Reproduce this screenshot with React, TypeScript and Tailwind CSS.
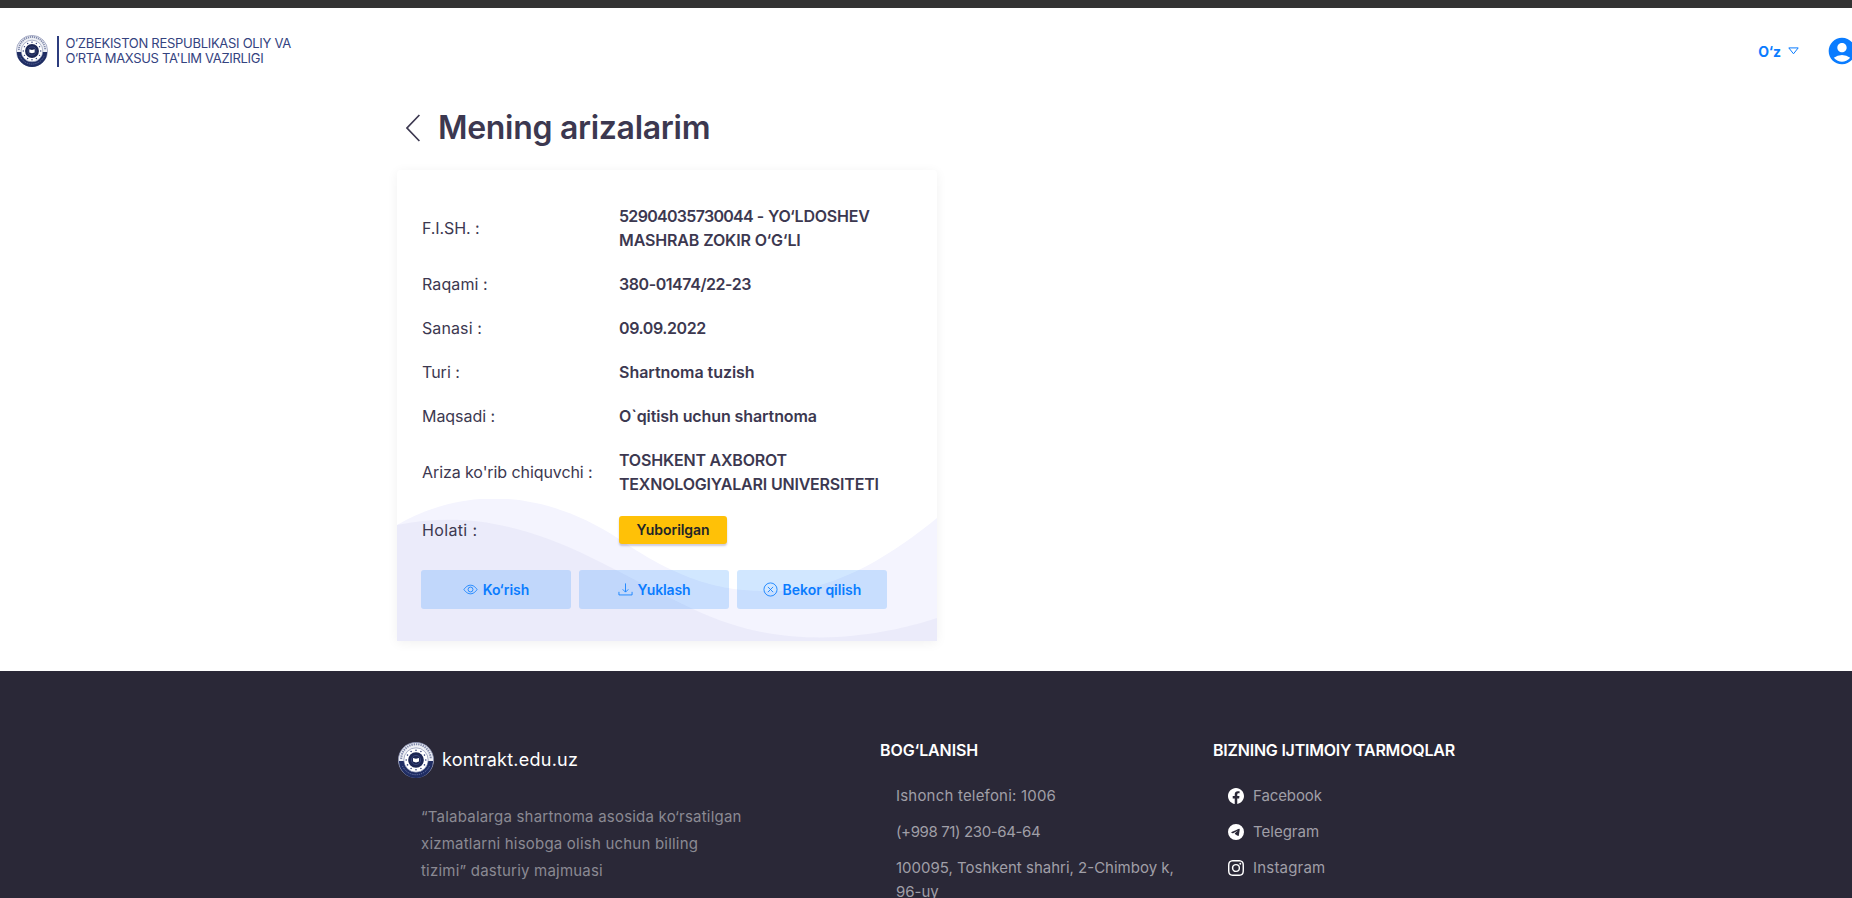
import type { ReactNode } from "react";
import { MdAccountCircle } from "react-icons/md";
import { BsFacebook, BsTelegram, BsInstagram, BsYoutube } from "react-icons/bs";

function Emblem({ className }: { className: string }) {
  const dots = Array.from({ length: 12 }, (_, i) => (i * Math.PI) / 6);
  return (
    <svg viewBox="0 0 36 36" className={className} fill="none">
      <circle cx="18" cy="18" r="17.6" fill="#eef0f5" stroke="#8b93b5" strokeWidth="0.8" />
      <path d="M1 19a17 17 0 0 0 34 0z" fill="#1f2d63" />
      <path d="M3.2 17a14.8 14.8 0 0 1 29.6 0" stroke="#8089ab" strokeWidth="2" strokeDasharray="1.4 0.9" />
      <path d="M4.5 24a14.8 14.8 0 0 0 27 0" stroke="#6c78a8" strokeWidth="1" strokeDasharray="1.2 1" />
      <circle cx="18" cy="18" r="12.2" fill="#fff" stroke="#6e78a0" strokeWidth="0.6" />
      {dots.map((a) => (
        <circle key={a} cx={18 + 9.8 * Math.sin(a)} cy={18 - 9.8 * Math.cos(a)} r="0.8" fill="#34427a" />
      ))}
      <circle cx="18" cy="18" r="7.8" fill="#1c2754" />
      <circle cx="18" cy="18" r="4.6" stroke="#46528a" strokeWidth="0.7" />
      <path d="M15 16l3 .8 3-.8v3.6l-3 .8-3-.8z" fill="#fff" />
    </svg>
  );
}

function Row({ label, children, tall }: { label: ReactNode; children: ReactNode; tall?: boolean }) {
  return (
    <div className={tall ? "flex h-12 items-center" : "flex items-center py-[10px]"}>
      <div className="w-[197px] shrink-0 text-[16px] leading-6">{label}</div>
      <div className="text-[16px] leading-6 font-semibold whitespace-nowrap">{children}</div>
    </div>
  );
}

function ActionButton({ icon, children }: { icon: ReactNode; children: ReactNode }) {
  return (
    <button className="flex h-[39px] w-[150px] items-center justify-center gap-[5px] rounded-[3px] bg-[#007bff]/18 text-[14px] font-semibold text-[#0a7cff]">
      {icon}
      {children}
    </button>
  );
}

const eye = (
  <svg viewBox="0 0 16 16" className="h-[15px] w-[15px]" fill="none" stroke="currentColor" strokeWidth="0.9">
    <path d="M1 8s2.6-4.6 7-4.6S15 8 15 8s-2.6 4.6-7 4.6S1 8 1 8z" />
    <circle cx="8" cy="8" r="2.6" />
  </svg>
);

const download = (
  <svg viewBox="0 0 16 16" className="h-[15px] w-[15px]" fill="none" stroke="currentColor" strokeWidth="0.9">
    <path d="M1 10.5v3.3h14v-3.3M8 1.5v9M5 7.8l3 3 3-3" />
  </svg>
);

const cancel = (
  <svg viewBox="0 0 16 16" className="h-[15px] w-[15px]" fill="none" stroke="currentColor" strokeWidth="0.9">
    <circle cx="8" cy="8" r="7" />
    <path d="M5.2 5.2l5.6 5.6M10.8 5.2l-5.6 5.6" />
  </svg>
);

function Social({ icon, children }: { icon: ReactNode; children: ReactNode }) {
  return (
    <li className="flex h-6 items-center gap-[9px]">
      <span className="text-[16px] text-white">{icon}</span>
      {children}
    </li>
  );
}

export default function App() {
  return (
    <div className="flex h-[898px] w-full flex-col overflow-hidden bg-white font-['Inter',sans-serif] text-[#3c3850]">
      <div className="h-2 shrink-0 bg-[#333333]" />
      <header className="flex h-[86px] shrink-0 items-center justify-between pl-4">
        <div className="flex items-center">
          <Emblem className="h-8 w-8" />
          <div className="ml-[9px] h-[31px] w-[1.5px] bg-[#2c3c7e]" />
          <div className="ml-[7px] text-[13px] leading-[15px] text-[#34437f]">
            <div className="tracking-[-0.29px]">O‘ZBEKISTON RESPUBLIKASI OLIY VA</div>
            <div className="tracking-[-0.32px]">O‘RTA MAXSUS TA'LIM VAZIRLIGI</div>
          </div>
        </div>
        <div className="flex items-center text-[#0a7cff]">
          <span className="text-[14px] font-bold">O‘z</span>
          <svg viewBox="0 0 11 8" className="ml-[7px] h-2 w-[11px]" fill="none" stroke="currentColor" strokeWidth="1">
            <path d="M.8 .9h9.4L5.5 6.8z" />
          </svg>
          <MdAccountCircle className="-mr-[6px] ml-[27px] text-[32px]" />
        </div>
      </header>

      <main className="h-[577px] shrink-0 pl-[397px]">
        <div className="flex h-[76px] items-center pl-[9px]">
          <svg viewBox="0 0 14 28" className="mt-[-8px] h-7 w-[14px]" fill="none" stroke="currentColor" strokeWidth="1.7">
            <path d="M13.4 1L1 14l12.4 13" />
          </svg>
          <h1 className="mt-[-8px] ml-[18px] text-[32px] font-semibold tracking-[-0.3px]">Mening arizalarim</h1>
        </div>
        <section className="relative h-[471px] w-[540px] rounded-t-[4px] bg-white shadow-[0_2px_12px_rgba(0,0,0,0.06)]">
          <svg viewBox="0 0 540 142" className="absolute bottom-0 left-0 h-[142px] w-[540px]">
            <path d="M0 26C60-9 140-14 222 40C300 94 345 92 383 92C440 92 500 52 540 19V142H0z" fill="#f4f4fe" />
            <path d="M0 26C60 14 120 22 193 58C230 76 262 94 296 110C350 136 400 140 440 138C485 135 515 127 540 119V142H0z" fill="#ebebfa" />
          </svg>
          <div className="relative pt-6 pl-[25px]">
            <Row label={<span className="tracking-[-0.1px]">F.I.SH. :</span>}>
              <div>
                <span className="tracking-[-0.7px]">52904035730044</span>
                <span className="tracking-[-0.2px]"> - YO‘LDOSHEV</span>
              </div>
              <div className="tracking-[-0.13px]">MASHRAB ZOKIR O‘G‘LI</div>
            </Row>
            <Row label={<span className="tracking-[0.1px]">Raqami :</span>}>
              <span className="tracking-[-0.44px]">380-01474/22-23</span>
            </Row>
            <Row label={<span className="tracking-[0.1px]">Sanasi :</span>}>
              <span className="tracking-[-0.4px]">09.09.2022</span>
            </Row>
            <Row label={<span>Turi :</span>}>
              <span className="tracking-[-0.03px]">Shartnoma tuzish</span>
            </Row>
            <Row label={<span className="tracking-[-0.05px]">Maqsadi :</span>}>
              <span className="tracking-[-0.1px]">O`qitish uchun shartnoma</span>
            </Row>
            <Row label={<span className="tracking-[-0.08px]">Ariza ko'rib chiquvchi :</span>}>
              <div className="tracking-[-0.2px]">TOSHKENT AXBOROT</div>
              <div className="tracking-[-0.19px]">TEXNOLOGIYALARI UNIVERSITETI</div>
            </Row>
            <Row label={<span className="tracking-[0.35px]">Holati :</span>} tall>
              <div className="flex h-7 w-[108px] items-center justify-center rounded-[3px] bg-[#ffc107] text-[14px] tracking-[-0.06px] text-[#212529] shadow-[0_2px_2px_rgba(60,50,120,0.25)]">
                Yuborilgan
              </div>
            </Row>
          </div>
          <div className="relative mt-4 flex gap-2 pl-6">
            <ActionButton icon={eye}><span>Ko‘rish</span></ActionButton>
            <ActionButton icon={download}><span className="tracking-[-0.15px]">Yuklash</span></ActionButton>
            <ActionButton icon={cancel}><span>Bekor qilish</span></ActionButton>
          </div>
        </section>
      </main>

      <footer className="flex min-h-0 grow items-start bg-[#2a2837] pl-[397px] text-[15px] text-[#a09fa7]">
        <div className="w-[483px] shrink-0 pt-[70px]">
          <div className="flex h-[38px] items-center pl-px text-[18px] text-white">
            <Emblem className="h-9 w-9" />
            <span className="-mt-px ml-[8px] tracking-[0.24px]">kontrakt.edu.uz</span>
          </div>
          <p className="mt-[24px] pl-[24px] leading-[27px] tracking-[0.21px] text-[#8b8a93]">
            “Talabalarga shartnoma asosida ko‘rsatilgan
            <br />
            xizmatlarni hisobga olish uchun billing
            <br />
            tizimi” dasturiy majmuasi
          </p>
        </div>
        <div className="w-[333px] shrink-0 pt-[67px]">
          <h2 className="text-[16px] leading-6 font-semibold tracking-[-0.1px] text-white">BOG‘LANISH</h2>
          <ul className="mt-[22px] flex flex-col gap-3 pl-[16px] leading-6">
            <li className="tracking-[0.2px]">Ishonch telefoni: 1006</li>
            <li className="tracking-[-0.38px]">(+998 71) 230-64-64</li>
            <li>
              100095, Toshkent shahri, 2-Chimboy k,
              <br />
              96-uy
            </li>
          </ul>
        </div>
        <div className="shrink-0 pt-[67px]">
          <h2 className="text-[16px] leading-6 font-semibold tracking-[-0.22px] text-white">BIZNING IJTIMOIY TARMOQLAR</h2>
          <ul className="mt-[22px] flex flex-col gap-3 pl-[15px]">
            <Social icon={<BsFacebook />}><span className="tracking-[-0.1px]">Facebook</span></Social>
            <Social icon={<BsTelegram />}><span>Telegram</span></Social>
            <Social icon={<BsInstagram />}><span className="tracking-[0.2px]">Instagram</span></Social>
            <Social icon={<BsYoutube />}><span>Youtube</span></Social>
          </ul>
        </div>
      </footer>
    </div>
  );
}
